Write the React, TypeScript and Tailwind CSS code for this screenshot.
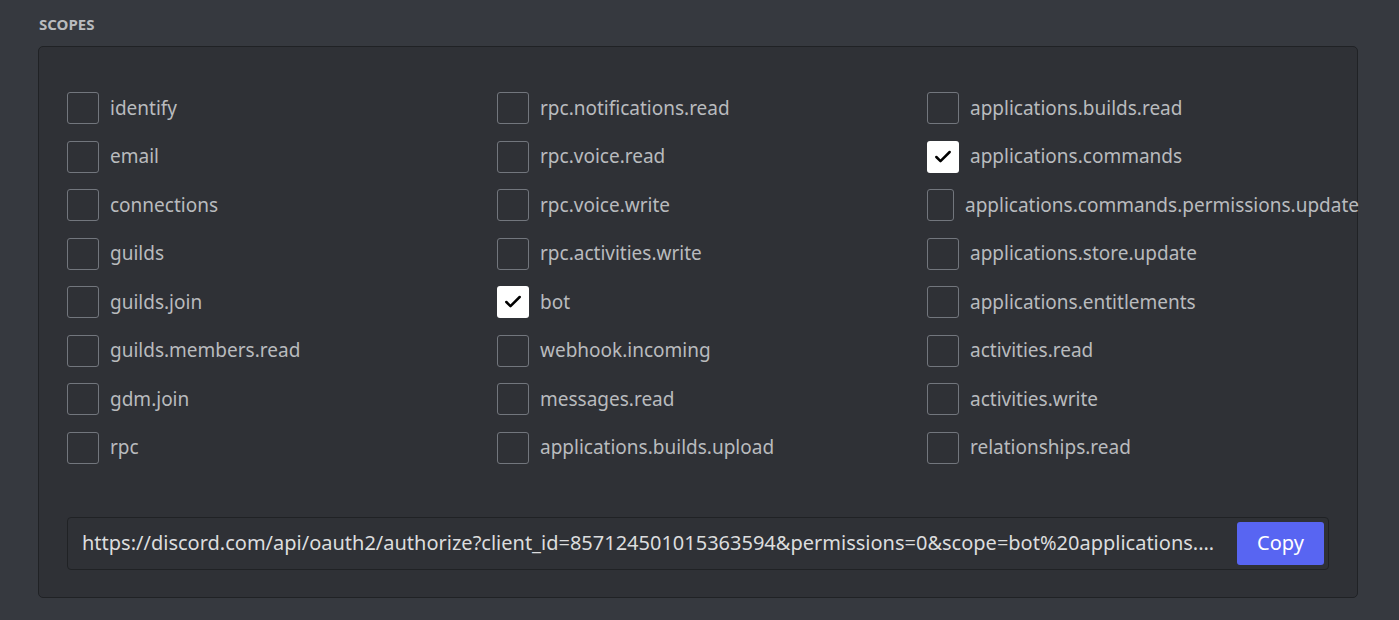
import { Check } from "lucide-react";

type Scope = { name: string; checked?: boolean; narrow?: boolean };

const columns: Scope[][] = [
  [
    { name: "identify" },
    { name: "email" },
    { name: "connections" },
    { name: "guilds" },
    { name: "guilds.join" },
    { name: "guilds.members.read" },
    { name: "gdm.join" },
    { name: "rpc" },
  ],
  [
    { name: "rpc.notifications.read" },
    { name: "rpc.voice.read" },
    { name: "rpc.voice.write" },
    { name: "rpc.activities.write" },
    { name: "bot", checked: true },
    { name: "webhook.incoming" },
    { name: "messages.read" },
    { name: "applications.builds.upload" },
  ],
  [
    { name: "applications.builds.read" },
    { name: "applications.commands", checked: true },
    { name: "applications.commands.permissions.update", narrow: true },
    { name: "applications.store.update" },
    { name: "applications.entitlements" },
    { name: "activities.read" },
    { name: "activities.write" },
    { name: "relationships.read" },
  ],
];

const ScopeBox = ({ scope }: { scope: Scope }) => {
  return (
    <div className="flex items-center h-8 gap-[11px] whitespace-nowrap">
      <div
        className={
          scope.checked
            ? "w-8 h-8 shrink-0 rounded-[3px] bg-white flex items-center justify-center"
            : scope.narrow
            ? "w-[27px] h-8 shrink-0 rounded-[3px] border border-[#72767d]"
            : "w-8 h-8 shrink-0 rounded-[3px] border border-[#72767d]"
        }
      >
        {scope.checked && <Check size={20} strokeWidth={3} color="#000" />}
      </div>
      <span className="text-[19px] text-[#b9bbbe] leading-none">{scope.name}</span>
    </div>
  );
};

const App = () => {
  const rows = columns[0].map((_, i) => columns.map((c) => c[i]));
  return (
    <div
      className="w-[1399px] h-[620px] bg-[#36393f] pl-[38px] pr-[41px] pt-[15px] overflow-hidden"
      style={{ fontFamily: '"Noto Sans", "Open Sans", sans-serif' }}
    >
      <h2 className="text-[15px] font-bold text-[#b9bbbe] uppercase leading-[18px] ml-[1px] mb-[13px]">Scopes</h2>
      <div className="bg-[#2f3136] border border-[#202225] rounded-[5px] pt-[45px] pb-[27px] px-[28px]">
        <div className="grid grid-cols-3 gap-x-[28px] gap-y-[16.5px]">
          {rows.flat().map((s) => (
            <ScopeBox key={s.name} scope={s} />
          ))}
        </div>
        <div className="mt-[53px] h-[53px] border border-[#202225] rounded-[4px] bg-[#2f3136] flex items-center pl-[14px] pr-[4px] gap-4">
          <span className="flex-1 min-w-0 truncate text-[20px] text-[#dcddde]">
            https://discord.com/api/oauth2/authorize?client_id=857124501015363594&permissions=0&scope=bot%20applications.commands
          </span>
          <button className="w-[87px] h-[43px] rounded-[3px] bg-[#5865f2] text-white text-[20px] shrink-0">Copy</button>
        </div>
      </div>
    </div>
  );
};

export default App;
